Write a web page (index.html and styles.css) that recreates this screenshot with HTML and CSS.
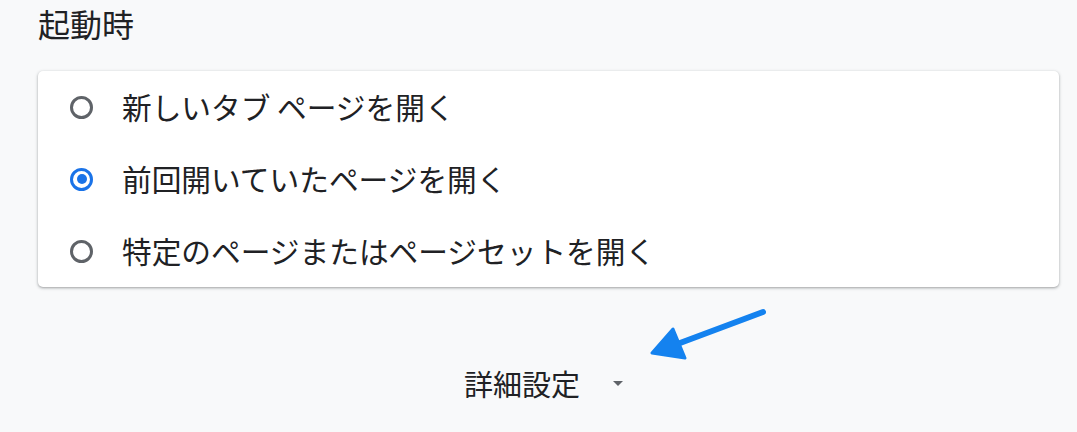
FILE: index.html
```html
<!DOCTYPE html>
<html lang="ja">
<head>
  <meta charset="UTF-8" />
  <title>起動時</title>
  <link rel="stylesheet" href="styles.css">
</head>
<body>
  <main class="page">
    <h2 class="section-title">起動時</h2>

    <div class="card">
      <label class="option">
        <span class="radio"></span>
        <span class="option-label">新しいタブ ページを開く</span>
      </label>
      <label class="option">
        <span class="radio checked"></span>
        <span class="option-label">前回開いていたページを開く</span>
      </label>
      <label class="option">
        <span class="radio"></span>
        <span class="option-label">特定のページまたはページセットを開く</span>
      </label>
    </div>

    <div class="advanced">
      <span class="advanced-label">詳細設定</span>
      <span class="caret"></span>
    </div>
  </main>

  <svg class="annotation" width="1077" height="432" viewBox="0 0 1077 432">
    <line x1="763" y1="312" x2="672" y2="346" stroke="#1482ef" stroke-width="6" stroke-linecap="round"></line>
    <polygon points="652,353 673,329 685,358" fill="#1482ef" stroke="#1482ef" stroke-width="3" stroke-linejoin="round"></polygon>
  </svg>
</body>
</html>
```

FILE: styles.css
```css
:root {
  --bg: #f8f9fa;
  --card: #ffffff;
  --text: #202124;
  --grey: #5f6368;
  --blue: #1a73e8;
  --font: "Noto Sans CJK JP", "Noto Sans", sans-serif;
}

body {
  margin: 0;
  background: var(--bg);
  color: var(--text);
  font-family: var(--font);
  width: 1077px;
  height: 432px;
  overflow: hidden;
  position: relative;
}

.page {
  width: 1021px;
  padding-left: 38px;
}

.section-title {
  margin: 0 0 25px 0;
  font-size: 32px;
  font-weight: 400;
  line-height: 46px;
}

.card {
  background: var(--card);
  border-radius: 5px;
  box-shadow: 0 1px 2px rgba(60, 64, 67, 0.3), 0 1px 3px 1px rgba(60, 64, 67, 0.15);
}

.option {
  display: flex;
  align-items: center;
  height: 72px;
  padding-left: 32px;
}

.radio {
  width: 17px;
  height: 17px;
  border: 3px solid var(--grey);
  border-radius: 50%;
  box-sizing: content-box;
  flex: none;
  display: flex;
  align-items: center;
  justify-content: center;
}

.radio.checked {
  border-color: var(--blue);
}

.radio.checked::after {
  content: "";
  width: 10px;
  height: 10px;
  border-radius: 50%;
  background: var(--blue);
}

.option-label {
  margin-left: 29px;
  font-size: 29.7px;
  line-height: 40px;
}

.advanced {
  display: flex;
  align-items: center;
  justify-content: center;
  height: 72px;
  margin-top: 60px;
  padding-right: 10px;
}

.advanced-label {
  font-size: 29px;
  line-height: 40px;
}

.caret {
  margin-left: 33px;
  width: 0;
  height: 0;
  border-left: 5px solid transparent;
  border-right: 5px solid transparent;
  border-top: 5px solid var(--grey);
}

.annotation {
  position: absolute;
  left: 0;
  top: 0;
  pointer-events: none;
}
```
